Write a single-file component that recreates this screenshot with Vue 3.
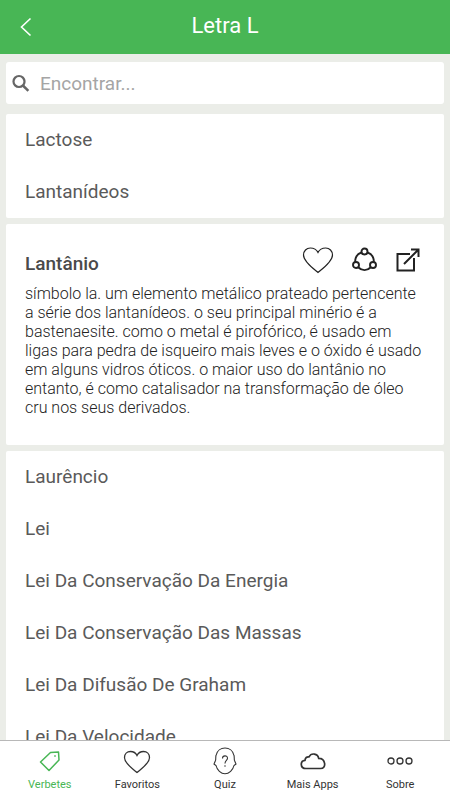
<template>
  <div class="app">
    <!-- Top bar -->
    <header class="top-bar">
      <button class="back" type="button" aria-label="Voltar">
        <svg width="12" height="20" viewBox="0 0 12 20">
          <path d="M10.500 1.500L1.500 10L10.500 18.500" fill="none" stroke="currentColor" stroke-width="1.600" />
        </svg>
      </button>
      <h1>{{ title }}</h1>
    </header>

    <main class="content">
      <label class="search">
        <svg width="18" height="18" viewBox="0 0 18 18">
          <circle cx="7" cy="7.500" r="5.500" fill="none" stroke="currentColor" stroke-width="2.200" />
          <path d="M11 11.500L16.300 16.800" stroke="currentColor" stroke-width="2.600" />
        </svg>
        <input v-model="search" type="text" placeholder="Encontrar..." aria-label="Encontrar" />
      </label>

      <ul class="word-list">
        <li v-for="word in before" :key="word"><a href="#">{{ word }}</a></li>
      </ul>

      <!-- Opened entry -->
      <article class="entry">
        <div class="entry-head">
          <h2>Lantânio</h2>
          <div class="actions">
            <button type="button" aria-label="Favoritar">
              <svg width="32" height="28" viewBox="0 0 32 28">
                <path d="M16 26.500C11 22.500 1.500 15.500 1.500 9C1.500 5 4.500 2 8.300 2C11.700 2 14.500 3.500 16 6.500C17.500 3.500 20.300 2 23.700 2C27.500 2 30.500 5 30.500 9C30.500 15.500 21 22.500 16 26.500Z" fill="none" stroke="currentColor" stroke-width="1.200" />
              </svg>
            </button>
            <button type="button" aria-label="Compartilhar">
              <svg width="26" height="26" viewBox="0 0 26 26" fill="none" stroke="currentColor" stroke-width="1.900">
                <circle cx="12.500" cy="4.500" r="3" />
                <circle cx="4" cy="18" r="3" />
                <circle cx="21" cy="18" r="3" />
                <path d="M9.500 5.500C5.500 7 3 10.500 3.200 15M15.500 5.500C19.500 7 22 10.500 21.800 15M6.500 20.500C10 24 15 24 18.500 20.500" />
              </svg>
            </button>
            <button type="button" aria-label="Abrir">
              <svg width="24" height="24" viewBox="0 0 24 24" fill="none" stroke="currentColor" stroke-width="2">
                <path d="M14 6H1.500V22.500H18V10M8 16L22 2M15 1.500H22.500V9" />
              </svg>
            </button>
          </div>
        </div>
        <p>{{ description }}</p>
      </article>

      <ul class="word-list">
        <li v-for="word in after" :key="word"><a href="#">{{ word }}</a></li>
      </ul>
    </main>

    <!-- Bottom tabs -->
    <nav class="tabs">
      <a v-for="tab in tabs" :key="tab.id" href="#" :class="{ active: tab.id === current }" @click.prevent="current = tab.id">
        <svg width="28" height="28" viewBox="0 0 28 28" fill="none" stroke="currentColor" stroke-width="1.300">
          <template v-if="tab.id === 'verbetes'">
            <path d="M4.500 15L14.500 5.500L22.500 5L23 13L13 23.500Z" stroke-width="1.500" stroke-linejoin="round" />
            <circle cx="19" cy="9" r="0.500" stroke-width="1" />
          </template>
          <path v-else-if="tab.id === 'favoritos'" d="M14 25.500C10 22 1.500 16.500 1.500 10.500C1.500 7 4 4.500 7.500 4.500C10.500 4.500 12.800 6 14 8.500C15.200 6 17.500 4.500 20.500 4.500C24 4.500 26.500 7 26.500 10.500C26.500 16.500 18 22 14 25.500Z" />
          <template v-else-if="tab.id === 'quiz'">
            <path d="M5 8.500C6 3.500 10 1 14 1C18 1 22 3.500 23 8.500C23.500 10.500 23 12 23.500 13.500L25 17L23 18.500C22 23 18 26.700 14 26.700C10 26.700 6 23 5 18.500L3 17L4.500 13.500C5 12 4.500 10.500 5 8.500Z" stroke-width="1.100" />
            <path d="M11.500 11.500C11.500 8 16.500 8 16.500 11.300C16.500 13.500 14 13.500 14 16.500M14 18.200V19.700" stroke-width="1.100" />
          </template>
          <path v-else-if="tab.id === 'apps'" d="M7 21.500C0.800 21.500 1 13.800 6 13.300C6.200 10.800 7.800 9.500 10 9.900C12.200 5.500 18.800 6.300 19.700 11.400C26.500 11.300 28 21.500 21.500 21.500Z" stroke-width="1.700" />
          <template v-else>
            <circle cx="5" cy="14" r="3" />
            <circle cx="14" cy="14" r="3" />
            <circle cx="23" cy="14" r="3" />
          </template>
        </svg>
        <span>{{ tab.label }}</span>
      </a>
    </nav>
  </div>
</template>

<script setup>
import { ref } from 'vue';

const title = 'Letra L';
const search = ref('');
const current = ref('verbetes');

// words above and below the opened entry
const before = ['Lactose', 'Lantanídeos'];
const after = [
  'Laurêncio',
  'Lei',
  'Lei Da Conservação Da Energia',
  'Lei Da Conservação Das Massas',
  'Lei Da Difusão De Graham',
  'Lei Da Velocidade',
];

const description =
  'símbolo la. um elemento metálico prateado pertencente a série dos lantanídeos. o seu principal minério é a bastenaesite. como o metal é pirofórico, é usado em ligas para pedra de isqueiro mais leves e o óxido é usado em alguns vidros óticos. o maior uso do lantânio no entanto, é como catalisador na transformação de óleo cru nos seus derivados.';

const tabs = [
  { id: 'verbetes', label: 'Verbetes' },
  { id: 'favoritos', label: 'Favoritos' },
  { id: 'quiz', label: 'Quiz' },
  { id: 'apps', label: 'Mais Apps' },
  { id: 'sobre', label: 'Sobre' },
];
</script>

<style>
body {
  margin: 0;
}
</style>

<style scoped>
.app {
  display: flex;
  flex-direction: column;
  height: 100vh;
  background: #ebede8;
  color: #5a5a5a;
  font-family: Roboto, "Liberation Sans", sans-serif;
}

button {
  display: flex;
  padding: 0;
  border: none;
  background: none;
  color: inherit;
  cursor: pointer;
}

a {
  color: inherit;
  text-decoration: none;
}

/* Top bar */
.top-bar {
  display: grid;
  grid-template-columns: 32px 1fr 32px;
  align-items: center;
  height: 54px;
  flex-shrink: 0;
  padding: 0 8px;
  box-sizing: border-box;
  background: #48b655;
  color: #fff;
}

.back {
  justify-content: center;
  padding-left: 4px;
}

h1 {
  margin: 0;
  padding-bottom: 2px;
  font-size: 22px;
  font-weight: 400;
  line-height: 26px;
  text-align: center;
}

/* Scrolling part */
.content {
  flex: 1;
  min-height: 0;
  overflow-y: auto;
  scrollbar-width: none;
  padding: 8px 6px 0;
}

.search {
  display: flex;
  align-items: center;
  gap: 10px;
  height: 42px;
  margin-bottom: 10px;
  padding: 0 6px;
  border-radius: 3px;
  background: #fff;
  color: #666;
}

.search input {
  flex: 1;
  min-width: 0;
  padding: 0;
  border: none;
  outline: none;
  background: none;
  color: #555;
  font-family: inherit;
  font-size: 19px;
}

.search input::placeholder {
  color: #a5a5a5;
}

.word-list {
  margin: 0;
  padding: 0;
  list-style: none;
  border-radius: 2px;
  background: #fff;
}

.word-list a {
  display: block;
  padding: 0 19px;
  font-size: 19px;
  line-height: 52px;
}

/* Opened entry */
.entry {
  margin: 6px 0;
  padding: 20px 19px 28px;
  border-radius: 2px;
  background: #fff;
}

.entry-head {
  display: flex;
  justify-content: space-between;
  height: 40px;
}

h2 {
  margin: 0;
  font-size: 19px;
  font-weight: 500;
  line-height: 40px;
  color: #4a4a4a;
}

.actions {
  display: flex;
  align-items: center;
  gap: 18px;
  height: 32px;
  padding-right: 5px;
  color: #222;
}

.entry p {
  margin: 0;
  font-size: 16px;
  font-weight: 300;
  line-height: 19px;
  color: #222;
}

/* Bottom tabs */
.tabs {
  display: flex;
  flex-shrink: 0;
  height: 60px;
  box-sizing: border-box;
  padding: 6px 6px 0;
  border-top: 1px solid #b8b8b8;
  background: #fff;
}

.tabs a {
  display: flex;
  flex: 1;
  flex-direction: column;
  align-items: center;
  gap: 3px;
  color: #333;
  font-size: 11px;
  line-height: 14px;
}

.tabs .active {
  color: #48b655;
}
</style>
